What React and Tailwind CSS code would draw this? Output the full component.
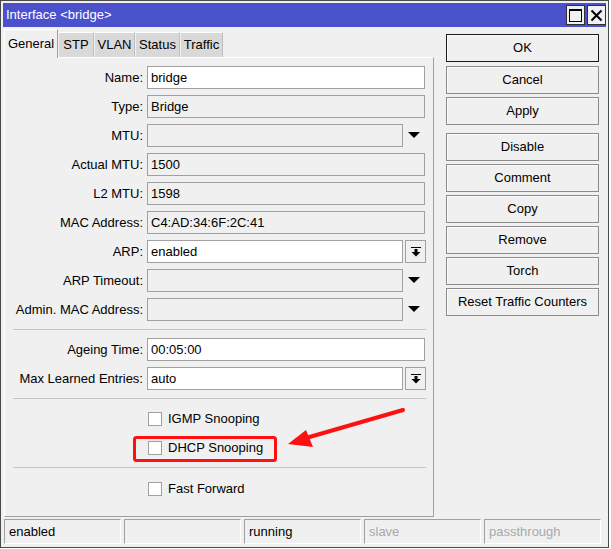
import React from "react";

const font = { fontFamily: '"Liberation Sans", Arial, sans-serif' };

function DropArrow() {
  return (
    <div className="w-[22px] h-[23px] flex items-center justify-center">
      <svg width="12" height="7" viewBox="0 0 12 7">
        <polygon points="0,0 12,0 6,6" fill="#000" />
      </svg>
    </div>
  );
}

function DownBarButton() {
  return (
    <div className="ml-[2px] w-[21px] h-[23px] border border-[#a0a0a0] bg-[#f0f0f0] flex items-center justify-center">
      <svg width="10" height="10" viewBox="0 0 10 10">
        <rect x="0" y="0" width="10" height="1" fill="#000" />
        <rect x="3.5" y="2" width="3" height="3" fill="#000" />
        <polygon points="0.5,5 9.5,5 5,9.5" fill="#000" />
      </svg>
    </div>
  );
}

function Row({ label, value, white, kind }) {
  const narrow = kind === "drop" || kind === "btn";
  return (
    <div className="flex items-center h-[23px]">
      <div className="w-[139px] text-right pr-[1px] text-[13px] text-black whitespace-nowrap">{label}</div>
      <div
        className={`ml-[3px] h-[23px] border border-[#a0a0a0] flex items-center pl-[3px] text-[13px] text-black ${
          white ? "bg-white" : "bg-[#f0f0f0]"
        } ${narrow ? "w-[256px]" : "w-[278px]"}`}
      >
        {value}
      </div>
      {kind === "drop" && <DropArrow />}
      {kind === "btn" && <DownBarButton />}
    </div>
  );
}

function Sep() {
  return <div className="ml-[8px] w-[413px] h-[1px] bg-[#c4c4c4]" />;
}

function Check({ label }) {
  return (
    <div className="flex items-center h-[29px] pl-[143px]">
      <div className="w-[14px] h-[14px] border border-[#a0a0a0] bg-white" />
      <span className="ml-[6px] text-[13px] text-black">{label}</span>
    </div>
  );
}

function Btn({ children, primary, className = "" }) {
  return (
    <div
      className={`w-[153px] h-[28px] flex items-center justify-center text-[13px] text-black bg-[#f0f0f0] border ${
        primary ? "border-[#1a1a1a]" : "border-[#8c8c8c]"
      } shadow-[inset_1px_1px_0_#fcfcfc] ${className}`}
    >
      {children}
    </div>
  );
}

function Cell({ children, gray }) {
  return (
    <div
      className={`w-[117px] h-[25px] flex items-center pl-[4px] text-[13px] border-t border-l border-[#a0a0a0] border-b border-r border-b-white border-r-white ${
        gray ? "text-[#a8a8a8]" : "text-black"
      }`}
    >
      {children}
    </div>
  );
}

export default function App() {
  const tabs = [
    ["STP", "w-[35px]"],
    ["VLAN", "w-[40px]"],
    ["Status", "w-[44px]"],
    ["Traffic", "w-[42px]"],
  ];
  return (
    <div className="relative w-[611px] h-[549px] bg-white overflow-hidden" style={font}>
      <div className="w-[609px] h-[548px] border border-[#4a4a4a] bg-[#f0f0f0] p-[2px] flex flex-col">
        {/* Title bar */}
        <div className="h-[24px] bg-[#4b50cd] flex items-center justify-between pl-[3px] pr-0">
          <span className="text-white text-[13px]">Interface &lt;bridge&gt;</span>
          <div className="flex items-center gap-[2px]">
            <div className="w-[19px] h-[20px] bg-[#f0f0f0] border border-[#303030] flex items-center justify-center">
              <svg width="13" height="13" viewBox="0 0 13 13">
                <rect x="0.5" y="0.5" width="12" height="12" fill="none" stroke="#000" strokeWidth="1" />
                <rect x="0" y="0" width="13" height="2" fill="#000" />
              </svg>
            </div>
            <div className="w-[19px] h-[20px] bg-[#f0f0f0] border border-[#303030] flex items-center justify-center">
              <svg width="13" height="13" viewBox="0 0 13 13">
                <path d="M1.5 1.5 L11.5 11.5 M11.5 1.5 L1.5 11.5" stroke="#000" strokeWidth="2" />
              </svg>
            </div>
          </div>
        </div>

        {/* Main */}
        <div className="flex mt-[2px] pl-[1px]">
          {/* Left column */}
          <div className="w-[430px] flex flex-col">
            <div className="h-[28px] flex items-end gap-[1px]">
              <div className="relative z-10 w-[54px] h-[29px] -mb-[1px] bg-[#f0f0f0] border-t border-l border-r border-t-white border-l-white border-r-[#a0a0a0] flex items-center justify-center text-[13px] text-black pb-[1px]">
                General
              </div>
              {tabs.map(([t, w]) => (
                <div
                  key={t}
                  className={`${w} h-[25px] bg-[#d9d9d9] border-t border-r border-t-white border-r-[#c0c0c0] flex items-center justify-center text-[13px] text-black`}
                >
                  {t}
                </div>
              ))}
            </div>
            <div className="h-[460px] border border-t-white border-l-white border-r-[#a0a0a0] border-b-[#a0a0a0] pt-[8px] flex flex-col">
              <div className="flex flex-col gap-[6px]">
                <Row label="Name:" value="bridge" white />
                <Row label="Type:" value="Bridge" />
                <Row label="MTU:" value="" kind="drop" />
                <Row label="Actual MTU:" value="1500" />
                <Row label="L2 MTU:" value="1598" />
                <Row label="MAC Address:" value="C4:AD:34:6F:2C:41" />
                <Row label="ARP:" value="enabled" white kind="btn" />
                <Row label="ARP Timeout:" value="" kind="drop" />
                <Row label="Admin. MAC Address:" value="" kind="drop" />
              </div>
              <div className="mt-[8px] mb-[8px]">
                <Sep />
              </div>
              <div className="flex flex-col gap-[6px]">
                <Row label="Ageing Time:" value="00:05:00" white />
                <Row label="Max Learned Entries:" value="auto" white kind="btn" />
              </div>
              <div className="mt-[8px]">
                <Sep />
              </div>
              <div className="pt-[5px]">
                <Check label="IGMP Snooping" />
                <Check label="DHCP Snooping" />
              </div>
              <div className="mt-[5px]">
                <Sep />
              </div>
              <div className="pt-[6px]">
                <Check label="Fast Forward" />
              </div>
            </div>
          </div>

          {/* Right column */}
          <div className="ml-[12px] pt-[5px] flex flex-col">
            <Btn primary>OK</Btn>
            <Btn className="mt-[4px]">Cancel</Btn>
            <Btn className="mt-[3px]">Apply</Btn>
            <Btn className="mt-[8px]">Disable</Btn>
            <Btn className="mt-[3px]">Comment</Btn>
            <Btn className="mt-[3px]">Copy</Btn>
            <Btn className="mt-[3px]">Remove</Btn>
            <Btn className="mt-[3px]">Torch</Btn>
            <Btn className="mt-[3px]">Reset Traffic Counters</Btn>
          </div>
        </div>

        {/* Status bar */}
        <div className="mt-[2px] pl-[1px] flex gap-[3px]">
          <Cell>enabled</Cell>
          <Cell></Cell>
          <Cell>running</Cell>
          <Cell gray>slave</Cell>
          <Cell gray>passthrough</Cell>
        </div>
      </div>

      {/* Annotation overlay */}
      <svg className="absolute left-0 top-0 pointer-events-none" width="611" height="549" viewBox="0 0 611 549">
        <rect x="134.5" y="437.5" width="141" height="23" rx="2" fill="none" stroke="#ff1010" strokeWidth="3" />
        <path d="M403 410 L306 438" stroke="#ff1010" strokeWidth="4" strokeLinecap="round" />
        <polygon points="288,444 306,430 313,447" fill="#ff1010" />
      </svg>
    </div>
  );
}
